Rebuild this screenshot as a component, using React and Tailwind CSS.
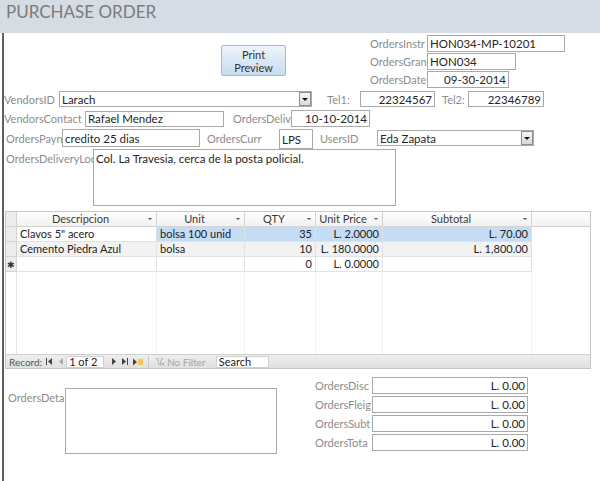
import React from "react";

const Label = ({ className = "", children }) => (
  <div className={`text-[11px] text-[#8c8c8c] leading-[13px] whitespace-nowrap overflow-hidden ${className}`}>{children}</div>
);

const Field = ({ className = "", right, top, children }) => (
  <div
    className={`border border-[#a9a9a9] bg-white text-[11.5px] text-[#262626] leading-[13px] flex px-[2px] whitespace-nowrap overflow-hidden ${right ? "justify-end" : ""} ${top ? "items-start pt-[2px]" : "items-center"} ${className}`}
  >
    {children}
  </div>
);

const Combo = ({ className = "", children }) => (
  <div className={`border border-[#a9a9a9] bg-white text-[11.5px] text-[#262626] leading-[13px] flex items-stretch overflow-hidden ${className}`}>
    <div className="flex-1 flex items-center px-[2px] whitespace-nowrap">{children}</div>
    <div className="w-[12px] border border-[#8f8f8f] bg-gradient-to-b from-[#f7f7f7] to-[#d9d9d9] flex items-center justify-center">
      <div className="w-0 h-0 border-l-[3px] border-r-[3px] border-t-[3px] border-l-transparent border-r-transparent border-t-[#111]" />
    </div>
  </div>
);

const Arrow = () => (
  <div className="w-0 h-0 border-l-[2px] border-r-[2px] border-t-[2px] border-l-transparent border-r-transparent border-t-[#555]" />
);

const HeadCell = ({ className = "", children, arrow = true }) => (
  <div className={`h-full border-r border-[#d4d4d4] flex items-center text-[11px] text-[#3a3a3a] ${className}`}>
    <div className="flex-1 text-center">{children}</div>
    {arrow && (
      <div className="w-[12px] flex justify-center">
        <Arrow />
      </div>
    )}
  </div>
);

const Cell = ({ className = "", right, children }) => (
  <div className={`h-full border-r border-b border-[#e2e2e2] flex items-center px-[3px] text-[11px] text-[#222] whitespace-nowrap overflow-hidden ${right ? "justify-end" : ""} ${className}`}>
    {children}
  </div>
);

const cols = ["w-[140px]", "w-[88px]", "w-[71px]", "w-[67px]", "w-[149px]"];

export default function App() {
  return (
    <div className="w-[600px] h-[481px] bg-white overflow-hidden font-['Lato','Open_Sans',sans-serif]">
      <div className="h-[33px] bg-[#d6dce4] pl-[6px] pt-[1px] text-[17px] leading-[22px] text-[#7b7b7b]">PURCHASE ORDER</div>
      <div className="ml-[2px] border-l-2 border-[#5e5e5e] h-[448px]">
        {/* top */}
        <div className="flex pt-[2px]">
          <div className="ml-[217px] mt-[10px] w-[65px] h-[31px] border border-[#9fb8d5] rounded-[2px] bg-gradient-to-b from-[#eef4fb] to-[#c8dbf0] flex flex-col items-center justify-center text-[11px] leading-[13px] text-[#333]">
            <div>Print</div>
            <div>Preview</div>
          </div>
          <div className="ml-[84px] flex flex-col gap-[1px]">
            <div className="flex items-center">
              <Label className="w-[57px]">OrdersInstr</Label>
              <Field className="w-[138px] h-[17px]">HON034-MP-10201</Field>
            </div>
            <div className="flex items-center">
              <Label className="w-[57px]">OrdersGran</Label>
              <Field className="w-[89px] h-[17px]">HON034</Field>
            </div>
            <div className="flex items-center">
              <Label className="w-[57px]">OrdersDate</Label>
              <Field right className="w-[82px] h-[17px]">09-30-2014</Field>
            </div>
          </div>
        </div>

        {/* vendors row */}
        <div className="flex items-center mt-[3px] h-[16px]">
          <Label className="w-[55px]">VendorsID</Label>
          <Combo className="w-[253px] h-[16px]">Larach</Combo>
          <Label className="ml-[15px] w-[33px]">Tel1:</Label>
          <Field right className="w-[75px] h-[16px]">22324567</Field>
          <Label className="ml-[7px] w-[26px]">Tel2:</Label>
          <Field right className="w-[76px] h-[16px]">22346789</Field>
        </div>

        <div className="flex items-center mt-[3px] h-[17px]">
          <Label className="w-[81px]">VendorsContact</Label>
          <Field className="w-[139px] h-[16px]">Rafael Mendez</Field>
          <Label className="ml-[9px] w-[58px]">OrdersDeliv</Label>
          <Field right className="w-[79px] h-[17px]">10-10-2014</Field>
        </div>

        <div className="flex items-start mt-[2px] h-[20px]">
          <Label className="ml-[2px] w-[56px] mt-[3px]">OrdersPayn</Label>
          <Field className="w-[138px] h-[18px]">credito 25 dias</Field>
          <Label className="ml-[7px] w-[72px] mt-[3px]">OrdersCurr</Label>
          <Field className="w-[34px] h-[20px]">LPS</Field>
          <Label className="ml-[7px] w-[57px] mt-[3px]">UsersID</Label>
          <Combo className="w-[157px] h-[16px] mt-[1px]">Eda Zapata</Combo>
        </div>

        <div className="flex items-start">
          <Label className="ml-[2px] w-[87px] mt-[3px] text-[10.6px]">OrdersDeliveryLoc</Label>
          <Field top className="w-[303px] h-[57px]">Col. La Travesia, cerca de la posta policial.</Field>
        </div>

        {/* subform */}
        <div className="mt-[5px] ml-[1px] w-[586px] h-[158px] border border-[#c6c6c6] flex flex-col">
          <div className="flex h-[15px] bg-gradient-to-b from-[#ffffff] to-[#f1f1f1] border-b border-[#d4d4d4]">
            <div className="w-[11px] h-full border-r border-[#d4d4d4] bg-[#ececec]" />
            <HeadCell className={cols[0]}>Descripcion</HeadCell>
            <HeadCell className={cols[1]}>Unit</HeadCell>
            <HeadCell className={cols[2]}>QTY</HeadCell>
            <HeadCell className={cols[3]}>Unit Price</HeadCell>
            <HeadCell className={cols[4]}>Subtotal</HeadCell>
          </div>
          <div className="flex h-[15px]">
            <div className="w-[11px] h-full border-r border-b border-[#d4d4d4] bg-[#ececec]" />
            <Cell className={`${cols[0]} bg-white`}>Clavos 5" acero</Cell>
            <Cell className={`${cols[1]} bg-[#c4dcf4]`}>bolsa 100 unid</Cell>
            <Cell right className={`${cols[2]} bg-[#c4dcf4]`}>35</Cell>
            <Cell right className={`${cols[3]} bg-[#c4dcf4]`}>L. 2.0000</Cell>
            <Cell right className={`${cols[4]} bg-[#c4dcf4]`}>L. 70.00</Cell>
          </div>
          <div className="flex h-[15px]">
            <div className="w-[11px] h-full border-r border-b border-[#d4d4d4] bg-[#ececec]" />
            <Cell className={`${cols[0]} bg-[#f2f2f2]`}>Cemento Piedra Azul</Cell>
            <Cell className={`${cols[1]} bg-[#f2f2f2]`}>bolsa</Cell>
            <Cell right className={`${cols[2]} bg-[#f2f2f2]`}>10</Cell>
            <Cell right className={`${cols[3]} bg-[#f2f2f2]`}>L. 180.0000</Cell>
            <Cell right className={`${cols[4]} bg-[#f2f2f2]`}>L. 1,800.00</Cell>
          </div>
          <div className="flex h-[15px]">
            <div className="w-[11px] h-full border-r border-b border-[#d4d4d4] bg-[#ececec] flex items-center justify-center text-[9px] text-[#333] leading-none">✱</div>
            <Cell className={cols[0]} />
            <Cell className={cols[1]} />
            <Cell right className={cols[2]}>0</Cell>
            <Cell right className={cols[3]}>L. 0.0000</Cell>
            <Cell right className={cols[4]} />
          </div>
          <div className="flex flex-1">
            <div className="w-[11px] h-full border-r border-[#e6e6e6]" />
            <div className={`${cols[0]} h-full border-r border-[#f0f0f0]`} />
            <div className={`${cols[1]} h-full border-r border-[#f0f0f0]`} />
            <div className={`${cols[2]} h-full border-r border-[#f0f0f0]`} />
            <div className={`${cols[3]} h-full border-r border-[#f0f0f0]`} />
            <div className={`${cols[4]} h-full border-r border-[#f0f0f0]`} />
          </div>
          <div className="h-[14px] bg-gradient-to-b from-[#eeeeee] to-[#e0e0e0] border-t border-[#cfcfcf] flex items-center text-[10px] text-[#555] leading-none">
            <span className="ml-[3px]">Record:</span>
            <svg className="ml-[4px]" width="6" height="7" viewBox="0 0 6 7"><rect x="0" y="0" width="1" height="7" fill="#444" /><path d="M6 0 L2 3.5 L6 7 Z" fill="#444" /></svg>
            <svg className="ml-[7px]" width="4" height="7" viewBox="0 0 4 7"><path d="M4 0 L0 3.5 L4 7 Z" fill="#aaa" /></svg>
            <div className="ml-[3px] w-[38px] h-[12px] bg-white border border-[#d0d0d0] flex items-center px-[2px] text-[11px] text-[#222]">1 of 2</div>
            <svg className="ml-[8px]" width="4" height="7" viewBox="0 0 4 7"><path d="M0 0 L4 3.5 L0 7 Z" fill="#444" /></svg>
            <svg className="ml-[6px]" width="6" height="7" viewBox="0 0 6 7"><path d="M0 0 L4 3.5 L0 7 Z" fill="#444" /><rect x="5" y="0" width="1" height="7" fill="#444" /></svg>
            <svg className="ml-[5px]" width="10" height="8" viewBox="0 0 10 8"><path d="M0 0.5 L4 4 L0 7.5 Z" fill="#444" /><rect x="5" y="1" width="5" height="6" fill="#f2c94c" /></svg>
            <div className="ml-[5px] w-px h-[12px] bg-[#c8c8c8]" />
            <svg className="ml-[7px]" width="9" height="8" viewBox="0 0 9 8"><path d="M0 0 H7 L4.5 3.5 V7 L2.5 6 V3.5 Z" fill="none" stroke="#aaa" strokeWidth="0.9" /><path d="M5.5 4.5 L8.5 7.5 M8.5 4.5 L5.5 7.5" stroke="#aaa" strokeWidth="0.9" /></svg>
            <span className="ml-[2px] text-[#a5a5a5]">No Filter</span>
            <div className="ml-[10px] w-[53px] h-[12px] bg-white border border-[#d0d0d0] flex items-center px-[2px] text-[11px] text-[#222]">Search</div>
          </div>
        </div>

        {/* bottom */}
        <div className="flex items-start">
          <div className="flex items-start mt-[19px]">
            <Label className="ml-[4px] w-[57px] mt-[3px]">OrdersDeta</Label>
            <Field className="w-[212px] h-[66px]" />
          </div>
          <div className="ml-[38px] mt-[8px] flex flex-col gap-[2px]">
            <div className="flex items-center">
              <Label className="w-[57px]">OrdersDisc</Label>
              <Field right className="w-[156px] h-[17px]">L. 0.00</Field>
            </div>
            <div className="flex items-center">
              <Label className="w-[57px]">OrdersFleig</Label>
              <Field right className="w-[156px] h-[17px]">L. 0.00</Field>
            </div>
            <div className="flex items-center">
              <Label className="w-[57px]">OrdersSubt</Label>
              <Field right className="w-[156px] h-[17px]">L. 0.00</Field>
            </div>
            <div className="flex items-center">
              <Label className="w-[57px]">OrdersTota</Label>
              <Field right className="w-[156px] h-[17px]">L. 0.00</Field>
            </div>
          </div>
        </div>
      </div>
    </div>
  );
}
